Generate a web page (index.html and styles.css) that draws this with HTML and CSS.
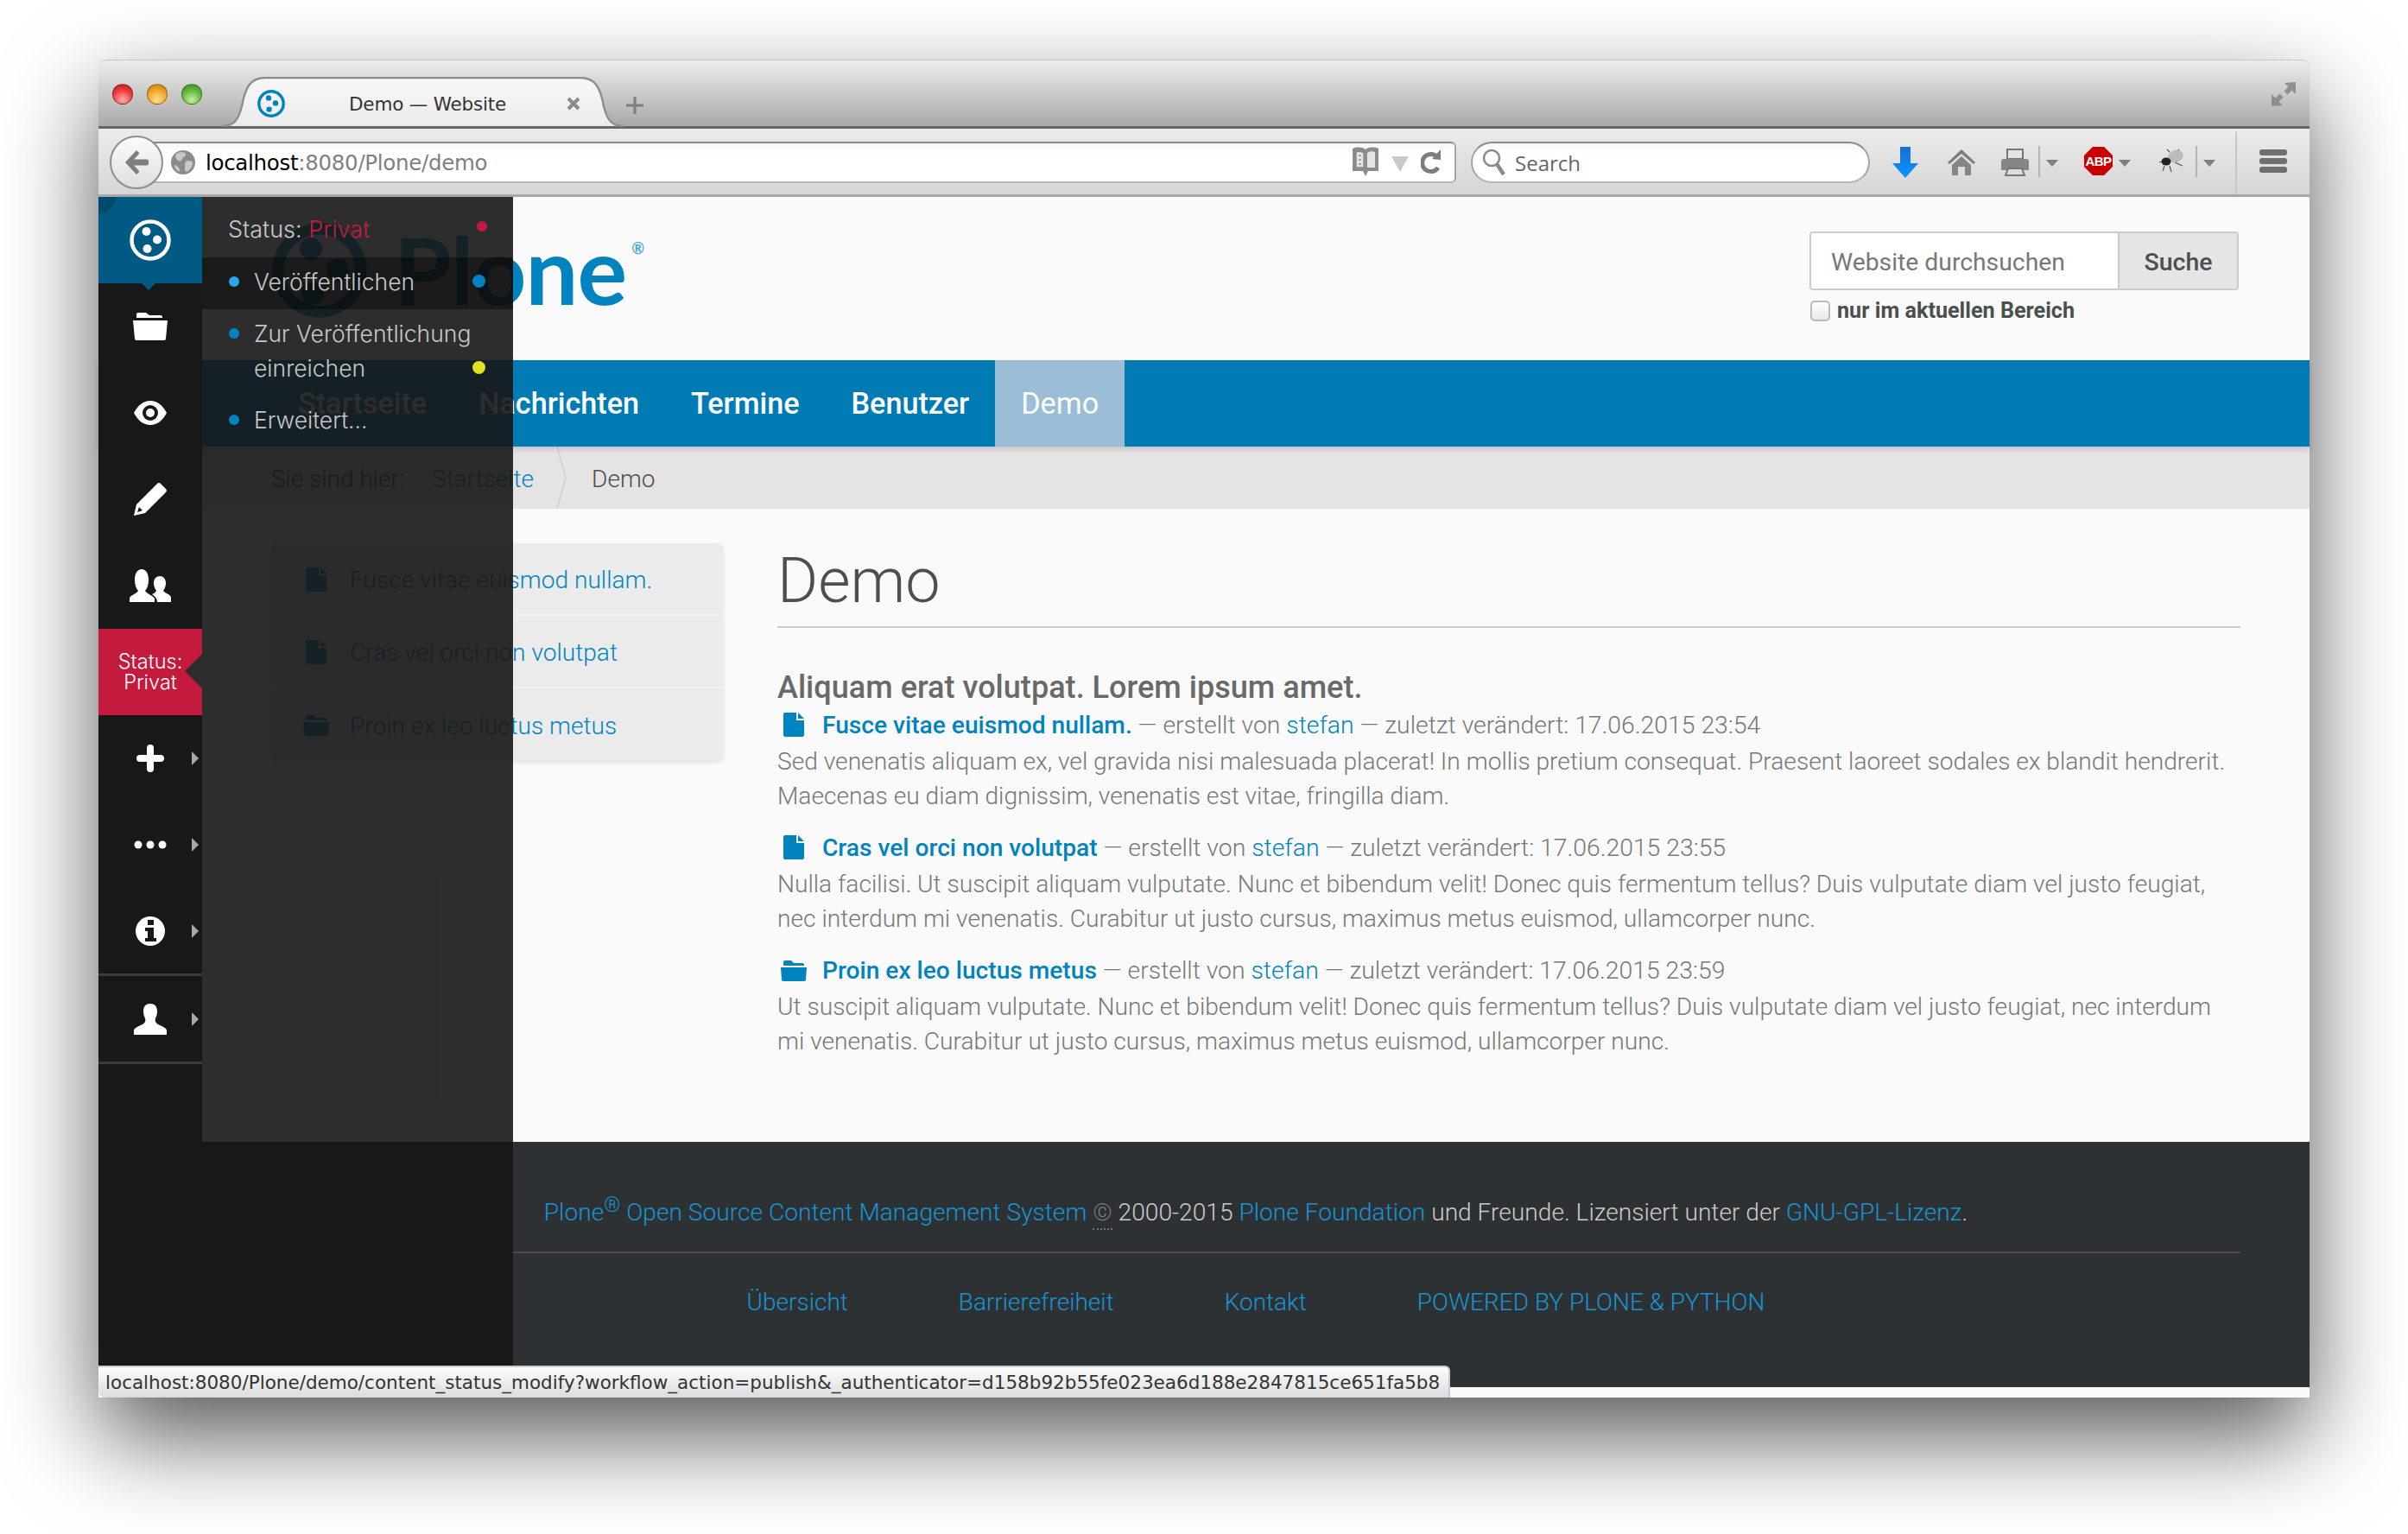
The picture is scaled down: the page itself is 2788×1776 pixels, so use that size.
FILE: index.html
```html
<!DOCTYPE html>
<html lang="de">
<head>
<meta charset="utf-8">
<title>Demo — Website</title>
<link rel="stylesheet" href="styles.css">
</head>
<body>
<div class="window">
  <div class="tabbar">
    <div class="lights"><span class="light red"></span><span class="light amber"></span><span class="light green"></span></div>
    <div class="tab">
      <svg class="tab-shape" viewBox="0 0 465 58" width="465" height="58"><defs><linearGradient id="tabg" x1="0" y1="0" x2="0" y2="1"><stop offset="0" stop-color="#f7f7f7"/><stop offset="1" stop-color="#ececec"/></linearGradient></defs><path d="M0 57C14 57 19 50 23 34C27 12 33 1 50 1H415C432 1 438 12 442 34C446 50 451 57 465 57Z" fill="url(#tabg)"/><path d="M0 57C14 57 19 50 23 34C27 12 33 1 50 1H415C432 1 438 12 442 34C446 50 451 57 465 57" fill="none" stroke="#8d8d8d" stroke-width="2.4"/></svg>
      <svg class="tab-icon" viewBox="0 0 32 32" width="32" height="32"><circle cx="16" cy="16" r="14.2" fill="none" stroke="#0083be" stroke-width="3.4"/><circle cx="13" cy="9.4" r="3.2" fill="#0083be"/><circle cx="21" cy="15.4" r="3.2" fill="#0083be"/><circle cx="13.6" cy="22.6" r="3.2" fill="#0083be"/></svg>
      <span class="tab-title">Demo — Website</span>
      <svg class="tab-close" viewBox="0 0 16 16" width="16" height="16"><path d="M2 2l12 12M14 2L2 14" stroke="#8a8a8a" stroke-width="4"/></svg>
    </div>
    <svg class="tab-new" viewBox="0 0 20 20" width="20" height="20"><path d="M10 0v20M0 10h20" stroke="#7d7d7d" stroke-width="3"/></svg>
    <svg class="resize" viewBox="0 0 28 28" width="28" height="28"><path d="M28 0v14l-4.500-4.500-5 5-4-4 5-5L15 1zM0 28V14l4.500 4.500 5-5 4 4-5 5L13 27z" fill="#8f8f8f"/></svg>
  </div>

  <div class="toolbar">
    <div class="back"><svg viewBox="0 0 28 30" width="28" height="30"><path d="M14 1l3.500 3.500L11 11.500h15a2 2 0 0 1 2 2v3a2 2 0 0 1-2 2H11l6.500 7L14 29 1 15z" fill="#7e7e7e"/></svg></div>
    <div class="urlbar">
      <svg class="globe" viewBox="0 0 28 28" width="28" height="28"><circle cx="14" cy="14" r="14" fill="#8b8b8b"/><path d="M8 3c4-2 8-1 9 1 1 3-3 3-4 6s-4 3-6 1-3-6 1-8zM17 13c3-2 7-1 8 1s-2 8-5 10-4 0-4-3 0-6 1-8zM4 17c2 0 5 2 6 5s0 3-2 2-4-4-4-7z" fill="#c8c8c8"/></svg>
      <span class="url"><b class="host">localhost</b>:8080/Plone/demo</span>
      <svg class="reader" viewBox="0 0 32 36" width="32" height="36"><path d="M1 2c5-2 11-2 15 1 4-3 10-3 15-1v26H19l-3 6-3-6H1z" fill="#8c8c8c"/><path d="M5 6c3-1 6-1 9 1v17H5zM8 10h3M8 15h3M8 20h3" fill="#e6e6e6" stroke="#8c8c8c" stroke-width="1.500"/><path d="M18 7c3-2 6-2 9-1v18h-9z" fill="#e6e6e6"/></svg>
      <span class="url-drop"></span>
      <svg class="reload" viewBox="0 0 24 32" width="24" height="32"><path d="M20 11a10 10 0 1 0 0 11" fill="none" stroke="#7d7d7d" stroke-width="5"/><path d="M13 12L23 1v12z" fill="#7d7d7d"/></svg>
    </div>
    <div class="searchbar">
      <svg class="mag" viewBox="0 0 28 32" width="28" height="32"><circle cx="11" cy="11" r="9" fill="none" stroke="#8a8a8a" stroke-width="2.500"/><path d="M17 18l8 12" stroke="#8a8a8a" stroke-width="4.500"/></svg>
      <span class="search-label">Search</span>
    </div>
    <div class="tools">
      <svg class="t-down" viewBox="0 0 30 36" width="30" height="36"><defs><linearGradient id="dl" x1="0" y1="0" x2="0" y2="1"><stop offset="0" stop-color="#1a6fd0"/><stop offset="1" stop-color="#0a94ff"/></linearGradient></defs><path d="M9 0h12v19h9L15 36 0 19h9z" fill="url(#dl)"/></svg>
      <svg class="t-home" viewBox="0 0 32 30" width="32" height="30"><path d="M16 0l16 15-2 2L16 5 2 17l-2-2z" fill="#7d7d7d"/><path d="M16 8l11 10v12h-7V20h-8v10H5V18z" fill="#858585"/></svg>
      <svg class="t-print" viewBox="0 0 34 32" width="34" height="32"><path d="M8 1h18v11H8z" fill="#e4e4e4" stroke="#777" stroke-width="2"/><path d="M4 12h26a3 3 0 0 1 3 3v10H1V15a3 3 0 0 1 3-3z" fill="#858585"/><path d="M9 23h16l3 8H6z" fill="#ddd" stroke="#777" stroke-width="2"/></svg>
      <span class="t-sep t-sep-a"></span><span class="t-drop t-drop-a"></span>
      <span class="abp">ABP</span><span class="t-drop t-drop-b"></span>
      <svg class="t-bug" viewBox="0 0 32 28" width="32" height="28"><path d="M2 16l7-2M8 20l-2 6M14 20l2 7M20 16l9 4M14 4L11 1M22 4l3-3" stroke="#555" stroke-width="1.200" fill="none"/><ellipse cx="21" cy="9" rx="9" ry="7" fill="#bbb" transform="rotate(-20 21 9)"/><ellipse cx="10" cy="15" rx="5.500" ry="4.500" fill="#222"/></svg>
      <span class="t-sep t-sep-b"></span><span class="t-drop t-drop-c"></span>
      <span class="t-div"></span>
      <span class="burger"><i></i><i></i><i></i></span>
    </div>
  </div>

  <div class="page">
    <header class="header">
      <div class="logo">
        <svg class="logo-mark" viewBox="0 0 110 110" width="110" height="110"><circle cx="55" cy="55" r="48" fill="none" stroke="#0083be" stroke-width="13"/><circle cx="45" cy="30" r="13" fill="#0083be"/><circle cx="76" cy="55" r="13" fill="#0083be"/><circle cx="47" cy="82" r="13" fill="#0083be"/></svg>
        <span class="logo-word">Plone</span><span class="logo-reg">®</span>
      </div>
      <form class="site-search">
        <div class="search-row"><span class="search-input">Website durchsuchen</span><span class="search-btn">Suche</span></div>
        <label class="search-scope"><span class="check"></span>nur im aktuellen Bereich</label>
      </form>
    </header>

    <nav class="nav">
      <a class="nav-item">Startseite</a>
      <a class="nav-item">Nachrichten</a>
      <a class="nav-item">Termine</a>
      <a class="nav-item">Benutzer</a>
      <a class="nav-item nav-active">Demo</a>
    </nav>

    <div class="crumbs">
      <span class="crumb-lead">Sie sind hier:</span>
      <a class="link">Startseite</a>
      <svg class="crumb-sep" viewBox="0 0 12 72" width="12" height="72"><path d="M1 0l10 36L1 72" fill="none" stroke="#cfcdcd" stroke-width="1.500"/></svg>
      <span class="crumb-cur">Demo</span>
    </div>

    <main class="main">
      <aside class="portlet">
        <a class="port-row"><svg class="ico-doc" viewBox="0 0 24 28" width="24" height="28"><path d="M0 2a2 2 0 0 1 2-2h13v9h9v17a2 2 0 0 1-2 2H2a2 2 0 0 1-2-2zM17 0l7 7h-7z" fill="#0083be"/></svg><span>Fusce vitae euismod nullam.</span></a>
        <a class="port-row"><svg class="ico-doc" viewBox="0 0 24 28" width="24" height="28"><path d="M0 2a2 2 0 0 1 2-2h13v9h9v17a2 2 0 0 1-2 2H2a2 2 0 0 1-2-2zM17 0l7 7h-7z" fill="#0083be"/></svg><span>Cras vel orci non volutpat</span></a>
        <a class="port-row"><svg class="ico-fold" viewBox="0 0 30 24" width="30" height="24"><path d="M3 4V2a2 2 0 0 1 2-2h7l3 3h10a2 2 0 0 1 2 2v1H3zM0 8h30l-1 14a2 2 0 0 1-2 2H3a2 2 0 0 1-2-2z" fill="#0083be"/></svg><span>Proin ex leo luctus metus</span></a>
      </aside>
      <article class="content">
        <h1 class="title">Demo</h1>
        <h2 class="lead">Aliquam erat volutpat. Lorem ipsum amet.</h2>
        <section class="entry">
          <div class="entry-head"><svg class="entry-ico" viewBox="0 0 24 28" width="24" height="28"><path d="M0 2a2 2 0 0 1 2-2h13v9h9v17a2 2 0 0 1-2 2H2a2 2 0 0 1-2-2zM17 0l7 7h-7z" fill="#0083be"/></svg><a class="entry-title">Fusce vitae euismod nullam.</a> — erstellt von <a class="link">stefan</a> — zuletzt verändert: 17.06.2015 23:54</div>
          <p class="entry-text">Sed venenatis aliquam ex, vel gravida nisi malesuada placerat! In mollis pretium consequat. Praesent laoreet sodales ex blandit hendrerit. Maecenas eu diam dignissim, venenatis est vitae, fringilla diam.</p>
        </section>
        <section class="entry">
          <div class="entry-head"><svg class="entry-ico" viewBox="0 0 24 28" width="24" height="28"><path d="M0 2a2 2 0 0 1 2-2h13v9h9v17a2 2 0 0 1-2 2H2a2 2 0 0 1-2-2zM17 0l7 7h-7z" fill="#0083be"/></svg><a class="entry-title">Cras vel orci non volutpat</a> — erstellt von <a class="link">stefan</a> — zuletzt verändert: 17.06.2015 23:55</div>
          <p class="entry-text">Nulla facilisi. Ut suscipit aliquam vulputate. Nunc et bibendum velit! Donec quis fermentum tellus? Duis vulputate diam vel justo feugiat, nec interdum mi venenatis. Curabitur ut justo cursus, maximus metus euismod, ullamcorper nunc.</p>
        </section>
        <section class="entry">
          <div class="entry-head"><svg class="entry-ico entry-ico-fold" viewBox="0 0 30 24" width="30" height="24"><path d="M3 4V2a2 2 0 0 1 2-2h7l3 3h10a2 2 0 0 1 2 2v1H3zM0 8h30l-1 14a2 2 0 0 1-2 2H3a2 2 0 0 1-2-2z" fill="#0083be"/></svg><a class="entry-title">Proin ex leo luctus metus</a> — erstellt von <a class="link">stefan</a> — zuletzt verändert: 17.06.2015 23:59</div>
          <p class="entry-text">Ut suscipit aliquam vulputate. Nunc et bibendum velit! Donec quis fermentum tellus? Duis vulputate diam vel justo feugiat, nec interdum mi venenatis. Curabitur ut justo cursus, maximus metus euismod, ullamcorper nunc.</p>
        </section>
      </article>
    </main>

    <footer class="footer">
      <p class="foot-line"><a class="foot-link">Plone<sup class="foot-reg">®</sup> Open Source Content Management System</a> <abbr class="foot-copy">©</abbr> 2000-2015 <a class="foot-link">Plone Foundation</a> und Freunde. Lizensiert unter der <a class="foot-link">GNU-GPL-Lizenz</a>.</p>
      <div class="foot-links">
        <a class="foot-link">Übersicht</a>
        <a class="foot-link">Barrierefreiheit</a>
        <a class="foot-link">Kontakt</a>
        <a class="foot-link">POWERED BY PLONE &amp; PYTHON</a>
      </div>
    </footer>
    <div class="page-end"></div>

    <div class="edit-bar">
      <div class="side">
        <a class="side-item side-logo"><svg viewBox="0 0 48 48" width="48" height="48"><circle cx="24" cy="24" r="21.500" fill="none" stroke="#fff" stroke-width="4.500"/><circle cx="19.500" cy="14" r="5" fill="#fff"/><circle cx="32" cy="23.500" r="5" fill="#fff"/><circle cx="20.500" cy="34" r="5" fill="#fff"/></svg></a>
        <a class="side-item"><svg viewBox="0 0 40 32" width="40" height="32"><path d="M4 6V2a2 2 0 0 1 2-2h9l4 3h13a2 2 0 0 1 2 2v1H4zM0 9h40l-2 21a2 2 0 0 1-2 2H4a2 2 0 0 1-2-2z" fill="#fff"/></svg></a>
        <a class="side-item"><svg viewBox="0 0 38 28" width="38" height="28"><path d="M0 14C5 5 11 0 19 0s14 5 19 14c-5 9-11 14-19 14S5 23 0 14z" fill="#fff"/><circle cx="19" cy="14" r="9" fill="#181818"/><circle cx="19" cy="14" r="5" fill="#fff"/></svg></a>
        <a class="side-item"><svg viewBox="0 0 38 38" width="38" height="38"><path d="M0 38l3-13L27 1a3 3 0 0 1 4 0l6 6a3 3 0 0 1 0 4L13 35zM4 34l6-2-4-4z" fill="#fff" fill-rule="evenodd"/></svg></a>
        <a class="side-item"><svg viewBox="0 0 48 38" width="48" height="38"><path d="M0 38v-4c0-4 8-5 10-9-3-3-4-8-4-13C6 5 9 0 14 0s8 5 8 12c0 5-1 10-4 13 2 4 9 5 11 9v4z" fill="#fff"/><path d="M32 38c0-4-3-7-6-9 2-1 4-2 5-4-2-3-3-6-3-9 0-5 3-8 7-8s7 3 7 8c0 3-1 6-3 9 2 3 9 4 9 8v5z" fill="#fff"/></svg></a>
        <a class="side-item side-status"><span class="status-txt">Status:<br>Privat</span><span class="status-notch"></span></a>
        <a class="side-item side-more"><svg viewBox="0 0 32 32" width="32" height="32"><path d="M16 4v24M4 16h24" stroke="#fff" stroke-width="8" stroke-linecap="round"/></svg></a>
        <a class="side-item side-more"><svg viewBox="0 0 38 10" width="38" height="10"><circle cx="5" cy="5" r="4.500" fill="#fff"/><circle cx="19" cy="5" r="4.500" fill="#fff"/><circle cx="33" cy="5" r="4.500" fill="#fff"/></svg></a>
        <a class="side-item side-more side-rule"><svg viewBox="0 0 34 34" width="34" height="34"><path fill-rule="evenodd" d="M17 0a17 17 0 1 1 0 34a17 17 0 0 1 0-34zM14 4v6h7V4zM11 13v4h3v8h-3v4h13v-4h-3V13z" fill="#fff"/></svg></a>
        <a class="side-item side-more side-rule"><svg viewBox="0 0 38 36" width="38" height="36"><path d="M19 0c5 0 8 3 8 9 0 3-1 6-2 8-1 3 0 5 3 7 4 2 10 4 10 7v5H0v-5c0-3 6-5 10-7 3-2 4-4 3-7-1-2-2-5-2-8 0-6 3-9 8-9z" fill="#fff"/></svg></a>
      </div>
      <div class="panel">
        <div class="panel-head"><span>Status: <em class="privat">Privat</em></span><span class="pip pip-red"></span></div>
        <a class="panel-row panel-hover"><span class="bullet bullet-on"></span><span class="panel-label">Veröffentlichen</span><span class="pip pip-blue"></span></a>
        <a class="panel-row"><span class="bullet"></span><span class="panel-label">Zur Veröffentlichung einreichen</span><span class="pip pip-yellow"></span></a>
        <a class="panel-row"><span class="bullet"></span><span class="panel-label">Erweitert…</span></a>
      </div>
    </div>
  </div>

  <div class="statusbar">localhost:8080/Plone/demo/content_status_modify?workflow_action=publish&amp;_authenticator=d158b92b55fe023ea6d188e2847815ce651fa5b8</div>
</div>
</body>
</html>
```

FILE: styles.css
```css
* { box-sizing: border-box; }
html, body { margin: 0; height: 1776px; background: #fff; overflow: hidden; }
a { color: inherit; text-decoration: none; }
p, h1, h2 { margin: 0; }

.window {
  position: relative;
  margin: 69px 0 0 114px;
  width: 2560px;
  height: 1549px;
  display: flex;
  flex-direction: column;
  overflow: visible;
  border-radius: 8px;
  box-shadow: 0 45px 110px rgba(0,0,0,.66);
  font-family: "Roboto", sans-serif;
}

/* chrome */
.tabbar {
  height: 80px;
  flex: none;
  display: flex;
  align-items: flex-start;
  background: linear-gradient(#ececec, #a9a9a9);
  border-bottom: 3px solid #666;
  border-top: 1px solid #c8c8c8;
  border-radius: 8px 8px 0 0;
}
.lights { display: flex; gap: 16px; margin: 27px 0 0 16px; }
.light { width: 24px; height: 24px; border-radius: 50%; border: 1px solid rgba(0,0,0,.35); }
.red { background: radial-gradient(circle at 50% 80%, #ffb0b0, #ee3a3a 55%, #b01818); }
.amber { background: radial-gradient(circle at 50% 80%, #ffe08a, #f2a528 55%, #b87a12); }
.green { background: radial-gradient(circle at 50% 80%, #c8f0a0, #62b83a 55%, #3d8a22); }
.tab {
  position: relative;
  width: 465px;
  height: 58px;
  margin: 19px 0 0 23px;
  display: flex;
  align-items: center;
}
.tab-shape { position: absolute; left: 0; top: 0; }
.tab-icon { position: relative; margin: 4px 0 0 41px; }
.tab-title { position: relative; width: 182px; margin: 4px 0 0 74px; font: 21.500px "DejaVu Sans", sans-serif; color: #333; white-space: nowrap; letter-spacing: -.2px; }
.tab-close { position: relative; margin: 4px 0 0 70px; }
.tab-new { margin: 42px 0 0 3px; }
.resize { margin: 25px 16px 0 auto; }

.toolbar {
  height: 79px;
  flex: none;
  display: flex;
  align-items: center;
  padding-top: 2px;
  background: linear-gradient(#ebebeb, #d6d6d6);
  border-bottom: 3px solid #a8a8a8;
}
.back {
  position: relative;
  z-index: 1;
  flex: none;
  width: 62px;
  height: 62px;
  margin-left: 13px;
  border-radius: 50%;
  border: 2px solid #8e8e8e;
  background: linear-gradient(#fbfbfb, #dedede);
  display: flex;
  align-items: center;
  justify-content: center;
}
.urlbar, .searchbar {
  height: 48px;
  display: flex;
  align-items: center;
  background: linear-gradient(#f7f7f7, #fff 30%);
  border: 2px solid #a5a5a5;
  border-top-color: #8c8c8c;
  border-bottom-color: #b5b5b5;
  flex: none;
}
.urlbar { width: 1508px; margin-left: -11px; padding-left: 20px; border-left: 0; border-radius: 0 6px 6px 0; }
.globe { flex: none; }
.url { margin-left: 12px; font: 24.500px "DejaVu Sans", sans-serif; color: #808080; letter-spacing: -.3px; white-space: nowrap; }
.host { color: #000; font-weight: 400; }
.reader { margin-left: auto; }
.url-drop { width: 0; height: 0; margin: 4px 0 0 14px; border: 10px solid transparent; border-top: 18px solid #c9c9c9; border-bottom: 0; }
.reload { margin: 0 15px 0 14px; }
.searchbar { width: 462px; margin-left: 17px; padding-left: 11px; border-radius: 24px; }
.mag { flex: none; }
.search-label { margin-left: 10px; font: 24px "Open Sans", sans-serif; color: #666; }
.tools { position: relative; flex: 1; align-self: stretch; margin-top: -2px; }
.tools > * { position: absolute; }
.t-down { left: 26px; top: 21px; }
.t-home { left: 90px; top: 24px; }
.t-print { left: 151px; top: 23px; }
.t-sep { top: 20px; width: 2px; height: 36px; background: #b5b5b5; }
.t-sep-a { left: 195px; }
.t-sep-b { left: 377px; }
.t-drop { top: 36px; width: 0; height: 0; border: 7px solid transparent; border-top: 8px solid #7f7f7f; border-bottom: 0; }
.t-drop-a { left: 204px; }
.t-drop-b { left: 288px; }
.t-drop-c { left: 386px; }
.abp {
  left: 248px;
  top: 21px;
  width: 33px;
  height: 33px;
  clip-path: polygon(30% 0, 70% 0, 100% 30%, 100% 70%, 70% 100%, 30% 100%, 0 70%, 0 30%);
  background: #c80000;
  color: #fff;
  font: 700 15px/33px "Liberation Sans", sans-serif;
  text-align: center;
  letter-spacing: -.5px;
}
.t-bug { left: 333px; top: 23px; }
.t-div { left: 423px; top: 4px; width: 2px; height: 72px; background: #c4c8cc; }
.burger { left: 451px; top: 24px; width: 32px; display: flex; flex-direction: column; gap: 3px; }
.burger i { display: block; height: 7px; border-radius: 3px; background: #6f6f6f; }

/* page */
.page { position: relative; flex: 1; display: flex; flex-direction: column; background: #fafafa; min-height: 0; }
.header { height: 189px; flex: none; display: flex; justify-content: space-between; padding: 0 82px 0 201px; }
.logo { display: flex; align-items: flex-start; color: #0083be; }
.logo-mark { margin-top: 30px; flex: none; }
.logo-word { margin-left: 31px; font: 700 108px/1 "Lato", sans-serif; margin-top: 29px; letter-spacing: -1px; }
.logo-reg { margin: 50px 0 0 6px; font: 700 18px/1 "Lato", sans-serif; color: #4aa8d6; }
.site-search { margin-top: 40px; width: 497px; }
.search-row { display: flex; height: 68px; border: 2px solid #ccc; border-radius: 4px; background: #fff; }
.search-input { flex: 1; padding-left: 23px; font-size: 28.300px; line-height: 67px; color: #777; }
.search-btn { width: 138px; background: #e5e5e5; border-left: 2px solid #ccc; text-align: center; font-size: 28.500px; font-weight: 500; line-height: 67px; color: #4a4f4f; }
.search-scope { display: flex; align-items: center; margin-top: 9px; font-size: 25.200px; font-weight: 700; color: #4a4f4f; }
.check { width: 23px; height: 24px; margin: 0 8px 0 1px; border: 2px solid #bbb; border-radius: 5px; background: linear-gradient(#fff, #e8e8e8); }

.nav { position: relative; height: 100px; flex: none; display: flex; padding-left: 201px; background: #007bb4; box-shadow: 0 3px 6px rgba(0,0,0,.15); color: #fff; }
.nav-item { padding: 0 30px; font-size: 34.200px; line-height: 101px; font-weight: 500; }
.nav-active { background: #9bbdd6; font-weight: 400; }

.crumbs { height: 72px; flex: none; display: flex; align-items: center; padding: 2px 0 0 200px; background: #e5e3e4; font-size: 28px; font-weight: 300; color: #4a4f4f; }
.crumb-lead { margin-right: 32px; }
.link { color: #0083be; }
.crumb-sep { margin: -2px 29px 0 26px; }

.main { flex: 1; min-height: 0; display: flex; align-items: flex-start; gap: 62px; padding: 40px 0 0 199px; }
.portlet { width: 525px; flex: none; border-radius: 8px; background: #ebebeb; box-shadow: 0 2px 4px rgba(0,0,0,.1); }
.port-row { height: 84px; display: flex; align-items: center; padding: 2px 0 0 41px; font-size: 28.100px; font-weight: 300; color: #0083be; border-bottom: 2px solid #f3f3f3; }
.port-row:last-child { border-bottom: 0; }
.ico-doc { margin-right: 27px; flex: none; }
.ico-fold { margin: 0 24px 0 -3px; flex: none; }

.content { width: 1694px; flex: none; color: #777; font-size: 28.150px; font-weight: 300; line-height: 40px; }
.title { height: 98px; font-size: 72px; line-height: 88px; font-weight: 300; color: #4a4f4f; border-bottom: 2px solid #ccc; }
.lead { margin: 48px 0 3px; font-size: 36.100px; line-height: 42px; font-weight: 500; color: #696969; }
.entry { margin-bottom: 20px; }
.entry-head { height: 42px; font-size: 28.350px; line-height: 40px; white-space: nowrap; }
.entry-ico { margin: 0 21px 0 7px; vertical-align: -4px; }
.entry-ico-fold { margin: 0 18px 0 4px; vertical-align: -3px; }
.entry-title { color: #0083be; font-size: 28.150px; font-weight: 500; }
.entry-text { line-height: 40px; }

.footer { height: 284px; flex: none; background: #2e3133; color: #cbcbcb; font-size: 28px; font-weight: 300; padding: 0 80px 0 200px; text-align: center; }
.foot-line { height: 129px; padding-top: 62px; font-size: 28.150px; line-height: 40px; border-bottom: 2px solid #4b4d4e; white-space: nowrap; }
.foot-link { color: #1794d4; }
.foot-reg { font-size: 24px; line-height: 0; }
.foot-copy { color: #77797a; border-bottom: 2px dotted #77797a; padding-bottom: 2px; }
.foot-links { display: flex; justify-content: center; gap: 128px; padding-top: 37px; line-height: 40px; }
.page-end { height: 12px; flex: none; background: #fafafa; }

/* overlay edit bar */
.edit-bar { position: absolute; left: 0; top: 0; bottom: 12px; width: 480px; display: flex; font-family: "Inter", sans-serif; font-weight: 300; }
.side { width: 120px; flex: none; background: #181818; display: flex; flex-direction: column; }
.side-item { position: relative; height: 100px; flex: none; display: flex; align-items: center; justify-content: center; }
.side-logo { background: #005a84; }
.side-logo::before { content: ""; position: absolute; left: 0; top: 0; width: 20px; height: 20px; background: #004a6e; border-radius: 0 0 20px 0; }
.side-logo::after { content: ""; position: absolute; left: 50px; top: 100px; z-index: 1; border: 8px solid transparent; border-top: 8px solid #005a84; border-bottom: 0; }
.side-status { background: #c41a3e; color: #fff; font-size: 23.500px; line-height: 24px; text-align: center; }
.status-notch { position: absolute; right: 0; top: 29px; border: 20px solid transparent; border-right: 20px solid #2d2d2d; border-left: 0; }
.side-more::after { content: ""; position: absolute; left: 108px; top: 42px; border: 8px solid transparent; border-left: 8px solid #a8a8a8; border-right: 0; }
.side-rule { height: 102px; border-bottom: 3px solid #3a3a3a; }
.panel { width: 360px; flex: none; background: rgba(22,22,22,.9); color: #c8c8c8; font-size: 26.500px; }
.panel-head { height: 70px; padding: 5px 0 0 30px; display: flex; align-items: center; font-size: 27px; }
.privat { color: #c41a3e; font-style: normal; }
.panel-row { position: relative; display: flex; padding: 8px 20px 12px 60px; line-height: 40px; }
.panel-hover { background: rgba(0,0,0,.4); }
.bullet { position: absolute; left: 31px; top: 22px; width: 12px; height: 12px; border-radius: 50%; background: #0083be; }
.bullet-on { background: #28a8e8; }
.pip { position: absolute; border-radius: 50%; }
.panel-head .pip-red { right: 30px; top: 28px; width: 12px; height: 12px; background: #c41a3e; }
.pip-blue { right: 32px; top: 20px; width: 15px; height: 15px; background: #0083be; }
.pip-yellow { right: 32px; top: 60px; width: 15px; height: 15px; background: #dfe31f; }

.statusbar {
  position: absolute;
  left: 0;
  bottom: 0;
  z-index: 3;
  height: 37px;
  padding: 0 10px 0 8px;
  background: linear-gradient(#fdfdfd, #dcdcdc);
  border-top: 2px solid #ccc;
  border-right: 2px solid #ccc;
  border-radius: 0 6px 0 8px;
  font: 21.500px/35px "DejaVu Sans", sans-serif;
  color: #333;
  white-space: nowrap;
}
```
